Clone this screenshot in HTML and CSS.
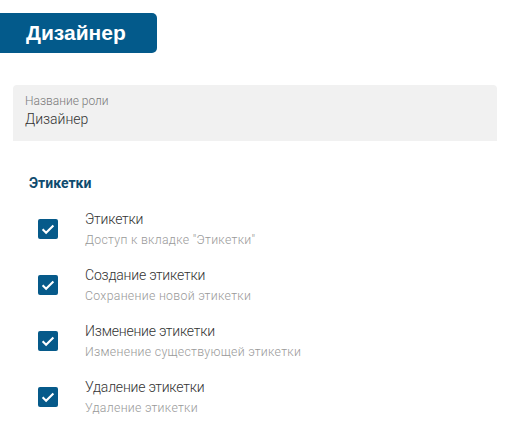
FILE: index.html
```html
<!DOCTYPE html>
<html lang="ru">
<head>
<meta charset="utf-8">
<link rel="stylesheet" href="styles.css">
</head>
<body>
<div class="badge">Дизайнер</div>
<div class="field">
  <div class="field-label">Название роли</div>
  <div class="field-value">Дизайнер</div>
</div>
<div class="section-title">Этикетки</div>
<div class="list">
  <div class="row">
    <span class="check"><svg viewBox="0 0 20 20" width="20" height="20"><path d="M4.6 10.2l3.5 3.5L15.4 6.4" fill="none" stroke="#fff" stroke-width="2.1"/></svg></span>
    <div class="texts"><div class="t">Этикетки</div><div class="s">Доступ к вкладке "Этикетки"</div></div>
  </div>
  <div class="row">
    <span class="check"><svg viewBox="0 0 20 20" width="20" height="20"><path d="M4.6 10.2l3.5 3.5L15.4 6.4" fill="none" stroke="#fff" stroke-width="2.1"/></svg></span>
    <div class="texts"><div class="t">Создание этикетки</div><div class="s">Сохранение новой этикетки</div></div>
  </div>
  <div class="row">
    <span class="check"><svg viewBox="0 0 20 20" width="20" height="20"><path d="M4.6 10.2l3.5 3.5L15.4 6.4" fill="none" stroke="#fff" stroke-width="2.1"/></svg></span>
    <div class="texts"><div class="t">Изменение этикетки</div><div class="s">Изменение существующей этикетки</div></div>
  </div>
  <div class="row">
    <span class="check"><svg viewBox="0 0 20 20" width="20" height="20"><path d="M4.6 10.2l3.5 3.5L15.4 6.4" fill="none" stroke="#fff" stroke-width="2.1"/></svg></span>
    <div class="texts"><div class="t">Удаление этикетки</div><div class="s">Удаление этикетки</div></div>
  </div>
</div>
</body>
</html>
```
FILE: styles.css
```css
html, body { margin: 0; padding: 0; background: #fff; }
body { font-family: Roboto, "Liberation Sans", sans-serif; color: #222; }
.badge {
  margin-top: 13px;
  width: 131px;
  height: 40px;
  padding-left: 26px;
  box-sizing: content-box;
  background: #035a8b;
  border-radius: 0 5px 5px 0;
  color: #fff;
  font-family: "Liberation Sans", Arial, sans-serif;
  font-weight: bold;
  font-size: 21px;
  line-height: 40px;
}
.field {
  margin: 32px 0 0 13px;
  width: 484px;
  height: 56px;
  box-sizing: border-box;
  padding: 8px 12px 0;
  background: #f1f1f1;
  border-radius: 4px 4px 0 0;
}
.field-label { font-size: 12px; line-height: 16px; color: #7a7a7a; font-weight: 300; }
.field-value { font-size: 14px; line-height: 20px; color: #333; font-weight: 300; }
.section-title {
  margin: 32px 0 0 29px;
  font-size: 14px;
  line-height: 20px;
  font-weight: bold;
  color: #0f4b6e;
}
.list {
  margin-top: 16px;
  display: flex;
  flex-direction: column;
  gap: 17px;
}
.row { display: flex; align-items: center; }
.check {
  margin-left: 38px;
  width: 20px;
  height: 20px;
  background: #065a8a;
  border-radius: 2px;
  display: flex;
}
.texts { margin-left: 27px; }
.t { font-size: 14px; line-height: 20px; color: #333; font-weight: 300; letter-spacing: -0.2px; }
.s { margin-top: 3px; font-size: 12.3px; line-height: 16px; color: #999; font-weight: 300; letter-spacing: 0.3px; }
```
